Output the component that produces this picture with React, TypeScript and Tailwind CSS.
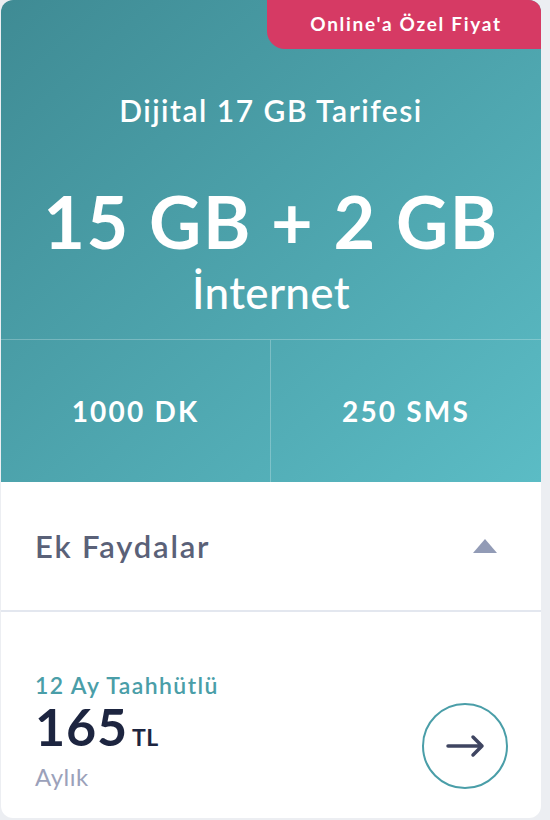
export default function App() {
  return (
    <div className="min-h-screen w-[550px] bg-[#eceef2] font-['Lato',sans-serif]">
      <div className="ml-px flex h-[818px] w-[540px] flex-col overflow-hidden rounded-xl bg-white">
        {/* Header */}
        <div className="relative h-[482px] shrink-0 bg-gradient-to-br from-[#3f8b94] to-[#5bbcc5] text-white">
          <div className="absolute right-0 top-0 flex h-[49px] w-[274px] items-center justify-center rounded-bl-[18px] bg-[#d63a64] pl-[4px] text-[19px] font-bold tracking-[1.7px]">
            Online'a Özel Fiyat
          </div>
          <div className="flex h-[340px] flex-col items-center border-b border-white/25 pt-[92px]">
            <div className="text-[30px] font-semibold leading-[36px] tracking-[1.5px]">Dijital 17 GB Tarifesi</div>
            <div className="mt-[53px] text-[72px] font-bold leading-[80px] tracking-[1.6px]">15 GB + 2 GB</div>
            <div className="mt-[5px] text-[44px] font-medium leading-[52px] tracking-[0.3px]">İnternet</div>
          </div>
          <div className="grid h-[142px] grid-cols-2">
            <div className="flex items-center justify-center border-r border-white/25 text-[28px] font-bold tracking-[2.2px]">1000 DK</div>
            <div className="flex items-center justify-center text-[28px] font-bold tracking-[2.2px]">250 SMS</div>
          </div>
        </div>

        {/* Ek Faydalar */}
        <div className="flex h-[130px] shrink-0 items-center justify-between border-b-2 border-[#e3e7ef] pl-[34px] pr-[44px]">
          <span className="text-[31px] font-semibold tracking-[1.8px] text-[#5a6178]">Ek Faydalar</span>
          <svg width="24" height="14" viewBox="0 0 24 14">
            <polygon points="12,0 24,14 0,14" fill="#929bb6" />
          </svg>
        </div>

        {/* Price */}
        <div className="flex flex-1 items-start justify-between pl-[34px] pr-[33px] pt-[60px]">
          <div className="flex flex-col">
            <span className="text-[23px] font-semibold leading-[26px] tracking-[1.4px] text-[#4a9ea8]">12 Ay Taahhütlü</span>
            <div className="mt-[2px] flex items-baseline">
              <span className="text-[52px] font-bold leading-[52px] tracking-[0.8px] text-[#1d2540]">165</span>
              <span className="ml-[4px] text-[23px] font-bold leading-none tracking-[0.5px] text-[#1d2540]">TL</span>
            </div>
            <span className="mt-[10px] text-[24px] leading-[30px] tracking-[0.5px] text-[#9ba1ba]">Aylık</span>
          </div>
          <button className="mt-[31px] flex h-[86px] w-[86px] items-center justify-center rounded-full border-2 border-[#4a9ea8]">
            <svg width="40" height="24" viewBox="0 0 40 24" fill="none" stroke="#3f4561" strokeWidth="3.5" strokeLinecap="round" strokeLinejoin="round">
              <path d="M3 12H37M28 3L37 12L28 21" />
            </svg>
          </button>
        </div>
      </div>
    </div>
  )
}
